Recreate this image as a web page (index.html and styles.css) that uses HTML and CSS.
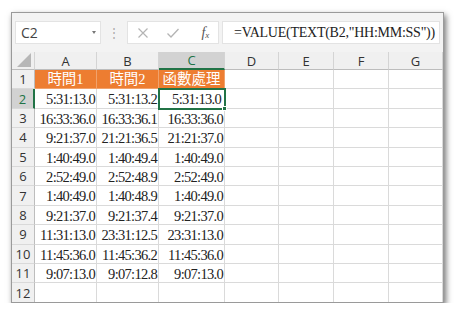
FILE: index.html
```html
<!DOCTYPE html>
<html>

<head>
    <meta charset="UTF-8">
    <title>Excel - VALUE TEXT</title>
    <link rel="stylesheet" href="styles.css">
</head>

<body>
    <div class="window">
        <div class="formula-bar">
            <div class="name-box">
                <span>C2</span>
                <span class="caret"></span>
            </div>
            <div class="grip">⋮</div>
            <div class="buttons">
                <svg width="12" height="12" viewBox="0 0 12 12"><path d="M1.5 1.5 L10.5 10.5 M10.5 1.5 L1.5 10.5" stroke="#b4b4b4" stroke-width="1.2" fill="none"/></svg>
                <svg width="14" height="12" viewBox="0 0 14 12"><path d="M1.5 6.5 L5 10 L12.5 2" stroke="#b4b4b4" stroke-width="1.3" fill="none"/></svg>
                <span class="fx">f<sub>x</sub></span>
            </div>
            <div class="formula">=VALUE(TEXT(B2,"HH:MM:SS"))</div>
        </div>

        <div class="sheet" id="sheet">
            <div class="corner"><span class="tri"></span></div>
            <div class="col-head">A</div>
            <div class="col-head">B</div>
            <div class="col-head active">C</div>
            <div class="col-head">D</div>
            <div class="col-head">E</div>
            <div class="col-head">F</div>
            <div class="col-head">G</div>
        </div>
    </div>

    <script>
        // rows of the sheet: time 1, time 2, result
        const rows = [
            ["5:31:13.0", "5:31:13.2", "5:31:13.0"],
            ["16:33:36.0", "16:33:36.1", "16:33:36.0"],
            ["9:21:37.0", "21:21:36.5", "21:21:37.0"],
            ["1:40:49.0", "1:40:49.4", "1:40:49.0"],
            ["2:52:49.0", "2:52:48.9", "2:52:49.0"],
            ["1:40:49.0", "1:40:48.9", "1:40:49.0"],
            ["9:21:37.0", "9:21:37.4", "9:21:37.0"],
            ["11:31:13.0", "23:31:12.5", "23:31:13.0"],
            ["11:45:36.0", "11:45:36.2", "11:45:36.0"],
            ["9:07:13.0", "9:07:12.8", "9:07:13.0"],
            ["", "", ""]
        ];

        const sheet = document.getElementById("sheet");

        const addCell = (cls, text) => {
            const el = document.createElement("div");
            el.className = cls;
            el.textContent = text;
            sheet.appendChild(el);
            return el;
        };

        // header row
        addCell("row-head", "1");
        ["時間1", "時間2", "函數處理"].forEach((t) => addCell("cell title", t));
        for (let i = 0; i < 4; i++) addCell("cell", "");

        rows.forEach((r, i) => {
            addCell(i === 0 ? "row-head active" : "row-head", String(i + 2));
            r.forEach((v, j) => {
                const c = addCell("cell num", v);
                if (i === 0 && j === 2) {
                    c.classList.add("selected");
                    const h = document.createElement("span");
                    h.className = "handle";
                    c.appendChild(h);
                }
            });
            for (let k = 0; k < 4; k++) addCell("cell", "");
        });
    </script>
</body>

</html>
```

FILE: styles.css
```css
body {
    margin: 0;
    background: #fff;
    font-family: "Segoe UI", "Open Sans", sans-serif;
}

.window {
    margin: 12px 0 0 11px;
    width: 433px;
    height: 291px;
    box-sizing: border-box;
    border: 1px solid #9a9a9a;
    background: #f3f3f3;
    box-shadow: 2px 3px 6px rgba(0, 0, 0, 0.55);
    overflow: hidden;
}

/* formula bar */
.formula-bar {
    display: flex;
    align-items: center;
    height: 39px;
    padding: 0 0 0 3px;
}

.name-box {
    display: flex;
    align-items: center;
    justify-content: space-between;
    width: 86px;
    height: 23px;
    box-sizing: border-box;
    padding: 0 4px 0 5px;
    background: #fff;
    border: 1px solid #e3e3e3;
    font-size: 14px;
    color: #444;
}

.caret {
    width: 0;
    height: 0;
    border-left: 2.5px solid transparent;
    border-right: 2.5px solid transparent;
    border-top: 3px solid #777;
}

.grip {
    width: 26px;
    text-align: center;
    color: #aaa;
    font-size: 12px;
}

.buttons {
    display: flex;
    align-items: center;
    justify-content: space-around;
    width: 92px;
    height: 23px;
    box-sizing: border-box;
    background: #fff;
    border: 1px solid #e3e3e3;
}

.fx {
    font-family: "Liberation Serif", serif;
    font-style: italic;
    font-size: 14px;
    color: #555;
    margin-left: 4px;
}

.fx sub {
    font-size: 9px;
    vertical-align: -1px;
}

.formula {
    flex: 1;
    height: 23px;
    margin-left: 3px;
    margin-right: 3px;
    box-sizing: border-box;
    padding-left: 11px;
    background: #fff;
    border: 1px solid #e3e3e3;
    font-family: "Liberation Serif", serif;
    font-size: 14px;
    line-height: 21px;
    color: #222;
    letter-spacing: -0.25px;
}

/* grid */
.sheet {
    display: grid;
    grid-template-columns: 23px 62px 62px 66px 54px 55px 55px 1fr;
    grid-template-rows: 18px repeat(12, 19.42px);
    background: #fff;
}

.corner {
    position: relative;
    background: #f0f0f0;
    border-right: 1px solid #d4d4d4;
    border-bottom: 1px solid #bdbdbd;
}

.tri {
    position: absolute;
    right: 3px;
    bottom: 2px;
    width: 0;
    height: 0;
    border-left: 14px solid transparent;
    border-bottom: 14px solid #b7b7b7;
}

.col-head {
    display: flex;
    align-items: center;
    justify-content: center;
    background: #f0f0f0;
    border-right: 1px solid #d4d4d4;
    border-bottom: 1px solid #bdbdbd;
    font-size: 13px;
    color: #333;
}

.col-head.active {
    background: #d2d2d2;
    color: #217346;
    border-bottom: 2px solid #217346;
}

.row-head {
    display: flex;
    align-items: center;
    justify-content: center;
    background: #f0f0f0;
    border-right: 1px solid #bdbdbd;
    border-bottom: 1px solid #d9d9d9;
    font-size: 13px;
    color: #333;
}

.row-head.active {
    background: #d2d2d2;
    color: #217346;
    border-right: 2px solid #217346;
}

.cell {
    position: relative;
    border-right: 1px solid #dadada;
    border-bottom: 1px solid #dadada;
    box-sizing: border-box;
    overflow: visible;
    white-space: nowrap;
}

.num {
    text-align: right;
    padding-right: 1px;
    font-family: "Liberation Serif", serif;
    font-size: 14.5px;
    letter-spacing: -0.7px;
    line-height: 20px;
    color: #222;
}

.title {
    background: #ed7d31;
    border-right-color: #f1a26c;
    border-bottom-color: #f1a26c;
    text-align: center;
    font-family: "Liberation Serif", "Noto Sans CJK TC", serif;
    font-size: 14.5px;
    line-height: 18px;
    color: #fff;
}

.selected {
    outline: 2px solid #217346;
    outline-offset: -1px;
    z-index: 2;
    padding-right: 3px;
}

.handle {
    position: absolute;
    right: -3px;
    bottom: -3px;
    width: 5px;
    height: 5px;
    background: #217346;
    border: 1px solid #fff;
    box-sizing: border-box;
}
```
